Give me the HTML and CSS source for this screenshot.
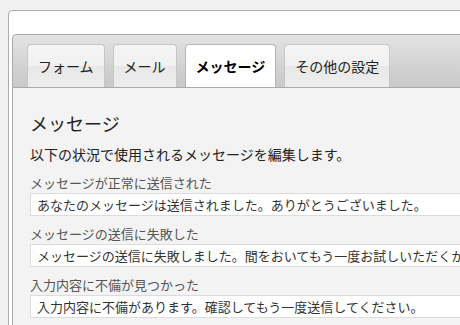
FILE: index.html
```html
<!DOCTYPE html>
<html lang="ja">
<head>
    <meta charset="UTF-8">
    <title>メッセージ設定</title>
    <link rel="stylesheet" href="styles.css">
</head>
<body>
    <div class="wrap">
        <div class="tabs">
            <a href="#form" class="tab">フォーム</a>
            <a href="#mail" class="tab">メール</a>
            <a href="#messages" class="tab active">メッセージ</a>
            <a href="#other" class="tab">その他の設定</a>
        </div>
        <div class="panel">
            <h2>メッセージ</h2>
            <p class="lead">以下の状況で使用されるメッセージを編集します。</p>
            <div class="field">
                <label for="msgSent">メッセージが正常に送信された</label>
                <input type="text" id="msgSent" value="あなたのメッセージは送信されました。ありがとうございました。">
            </div>
            <div class="field">
                <label for="msgFailed">メッセージの送信に失敗した</label>
                <input type="text" id="msgFailed" value="メッセージの送信に失敗しました。間をおいてもう一度お試しいただくか、">
            </div>
            <div class="field">
                <label for="msgInvalid">入力内容に不備が見つかった</label>
                <input type="text" id="msgInvalid" value="入力内容に不備があります。確認してもう一度送信してください。">
            </div>
        </div>
    </div>
</body>
</html>
```

FILE: styles.css
```css
body {
    margin: 0;
    padding: 10px 0 0 8px;
    background-color: #f1f1f1;
    font-family: "Noto Sans CJK JP", "Noto Sans", sans-serif;
    color: #333;
    overflow: hidden;
}
.wrap {
    width: 560px;
    background-color: #fff;
    border: 1px solid #adadad;
    border-radius: 4px 0 0 0;
    padding: 23px 0 0 3px;
}
.tabs {
    display: flex;
    gap: 8px;
    height: 43px;
    padding: 9px 0 0 14px;
    background: linear-gradient(#e3e3e3, #c8c8c8);
    border: 1px solid #aaa;
    border-radius: 4px 0 0 0;
}
.tab {
    display: block;
    padding: 0 10px;
    line-height: 43px;
    font-size: 14px;
    color: #222;
    text-decoration: none;
    border: 1px solid #c6c6c6;
    border-bottom: none;
    border-radius: 4px 4px 0 0;
    background: linear-gradient(#f4f4f4 0, #f1f1f1 50%, #e8e8e8 50%, #ededed 100%);
}
.tab.active {
    background: #fff;
    color: #000;
    font-weight: bold;
    border-color: #b5b5b5;
}
.panel {
    background-color: #f3f3f3;
    border-left: 1px solid #aaa;
    padding: 20px 0 10px 17px;
}
.panel h2 {
    margin: 0;
    font-size: 18px;
    font-weight: normal;
    line-height: 30px;
    color: #222;
}
.lead {
    margin: 5px 0 8px;
    font-size: 14px;
    line-height: 22px;
    color: #222;
}
.field {
    margin-bottom: 8px;
}
.field label {
    display: block;
    font-size: 13px;
    line-height: 20px;
    color: #555;
}
.field input {
    display: block;
    box-sizing: border-box;
    width: 520px;
    height: 23px;
    margin: 0;
    padding: 0 6px;
    border: 1px solid #dcdcdc;
    background-color: #fff;
    font-family: inherit;
    font-size: 13px;
    color: #333;
}
```
